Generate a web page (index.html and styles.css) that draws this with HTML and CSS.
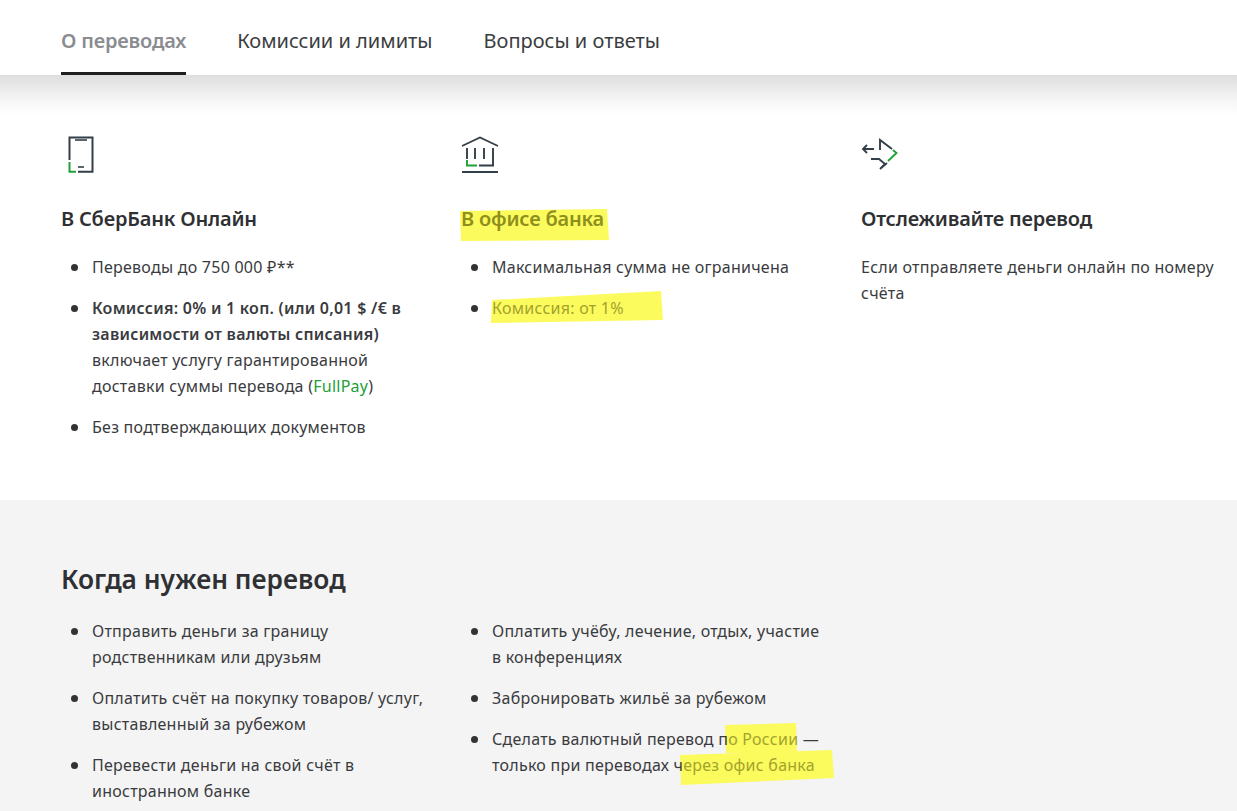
FILE: index.html
```html
<!DOCTYPE html>
<html lang="ru">
<head>
<meta charset="utf-8">
<title>Переводы</title>
<link rel="stylesheet" href="styles.css">
</head>
<body>
<div class="page">
  <nav class="tabs">
    <a class="tab tab-active">О переводах</a>
    <a class="tab">Комиссии и лимиты</a>
    <a class="tab">Вопросы и ответы</a>
  </nav>
  <div class="shade"></div>
  <section class="about">
    <div class="col">
      <svg class="icon" width="40" height="40" viewBox="0 0 40 40" fill="none" stroke-width="2">
        <path d="M8.5 25V2.5H31.5V36.7H17" stroke="#333f48"/>
        <path d="M14 5H26" stroke="#333f48" stroke-width="1.6"/>
        <path d="M17 32H23" stroke="#333f48" stroke-width="1.6"/>
        <path d="M8.5 27V36.7H15" stroke="#21a038"/>
      </svg>
      <h3 class="col-title">В СберБанк Онлайн</h3>
      <ul class="list">
        <li>Переводы до 750 000 ₽**</li>
        <li><b>Комиссия: 0% и 1 коп. (или 0,01 $ /€ в зависимости от валюты списания)</b> включает услугу гарантированной доставки суммы перевода (<span class="green">FullPay</span>)</li>
        <li>Без подтверждающих документов</li>
      </ul>
    </div>
    <div class="col">
      <svg class="icon" width="40" height="40" viewBox="0 0 40 40" fill="none" stroke-width="1.9">
        <path d="M1 11L19 2.5L37 11" stroke="#333f48"/>
        <path d="M6 13V24M14 13V24M23 13V24M32 13V30.5H18" stroke="#333f48"/>
        <path d="M6 25V30.5H16" stroke="#21a038"/>
        <path d="M1 37H37" stroke="#333f48"/>
      </svg>
      <h3 class="col-title"><span class="hl-strong">В офисе банка</span></h3>
      <ul class="list">
        <li>Максимальная сумма не ограничена</li>
        <li><span class="hl">Комиссия: от 1%</span></li>
      </ul>
    </div>
    <div class="col">
      <svg class="icon" width="40" height="40" viewBox="0 0 40 40" fill="none" stroke-width="1.9">
        <path d="M13 14H2M6 10L2 14L6 18" stroke="#333f48"/>
        <path d="M19 15V5L31 14" stroke="#333f48"/>
        <path d="M10 24H18L24 29L19 34L26 28" stroke="#333f48"/>
        <path d="M32 15L35.5 18L27 26" stroke="#21a038"/>
      </svg>
      <h3 class="col-title">Отслеживайте перевод</h3>
      <p class="note">Если отправляете деньги онлайн по номеру счёта</p>
    </div>
  </section>
  <section class="when">
    <h2 class="when-title">Когда нужен перевод</h2>
    <div class="when-cols">
      <ul class="list when-list">
        <li>Отправить деньги за границу родственникам или друзьям</li>
        <li>Оплатить счёт на покупку товаров/ услуг, выставленный за рубежом</li>
        <li>Перевести деньги на свой счёт в иностранном банке</li>
      </ul>
      <ul class="list when-list">
        <li>Оплатить учёбу, лечение, отдых, участие в&nbsp;конференциях</li>
        <li>Забронировать жильё за рубежом</li>
        <li>Сделать валютный перевод п<span class="hl">о России</span> — только при переводах ч<span class="hl">ерез офис банка</span></li>
      </ul>
    </div>
  </section>
  <svg class="marks" width="1237" height="811" viewBox="0 0 1237 811">
    <polygon points="460,211 607,209 609,240 461,241"/>
    <polygon points="492,300 661,291 663,320 491,323"/>
    <polygon points="725,725 796,723 797,754 726,753"/>
    <polygon points="680,755 832,750 834,778 681,785"/>
  </svg>
</div>
</body>
</html>
```

FILE: styles.css
```css
* {
  box-sizing: border-box;
}

html,
body {
  margin: 0;
  padding: 0;
  background: #fff;
}

.page {
  position: relative;
  width: 1237px;
  height: 811px;
  overflow: hidden;
  font-family: "Noto Sans", "Open Sans", sans-serif;
  font-size: 16px;
  line-height: 26px;
  letter-spacing: 0.25px;
  color: #3a3b3e;
}

.tabs {
  display: flex;
  gap: 51px;
  height: 75px;
  padding-left: 61px;
  background: #fff;
}

.tab {
  display: block;
  height: 75px;
  padding-top: 26px;
  font-size: 20px;
  line-height: 30px;
  letter-spacing: 0;
  color: #3a3d40;
}

.tab-active {
  font-weight: 600;
  letter-spacing: -0.18px;
  color: #8a8c90;
  border-bottom: 3px solid #1f1f22;
}

.shade {
  height: 40px;
  background: linear-gradient(#dedede, #f6f6f6 65%, #fff);
}

.about {
  display: grid;
  grid-template-columns: 400px 400px 376px;
  height: 385px;
  padding: 20px 0 0 61px;
}

.col {
  position: relative;
  z-index: 2;
}

.icon {
  display: block;
}

.col-title {
  margin: 29px 0 0;
  font-size: 20px;
  line-height: 30px;
  font-weight: 600;
  letter-spacing: -0.2px;
  color: #2f3033;
}

.list {
  margin: 20px 0 0;
  padding: 0 0 0 31px;
  list-style: none;
}

.list li {
  position: relative;
  margin-bottom: 15px;
  width: 345px;
}

.list li::before {
  content: "";
  position: absolute;
  left: -21px;
  top: 10px;
  width: 7px;
  height: 7px;
  border-radius: 50%;
  background: #333;
}

.list b {
  font-weight: 600;
}

.green {
  color: #21a038;
}

.hl {
  color: #a3a32c;
}

.hl-strong {
  color: #8e8f1c;
}

.note {
  margin: 20px 0 0;
  width: 360px;
}

.when {
  height: 311px;
  padding: 58px 0 0 61px;
  background: #f4f4f4;
}

.when-title {
  position: relative;
  z-index: 2;
  margin: 0;
  font-size: 26.3px;
  line-height: 42px;
  font-weight: 600;
  letter-spacing: 0;
  color: #2f3033;
}

.when-cols {
  position: relative;
  z-index: 2;
  display: flex;
}

.list.when-list {
  width: 400px;
  margin-top: 18px;
}

.marks {
  position: absolute;
  left: 0;
  top: 0;
  z-index: 1;
  pointer-events: none;
}

.marks polygon {
  fill: #fcfb5e;
}
```
